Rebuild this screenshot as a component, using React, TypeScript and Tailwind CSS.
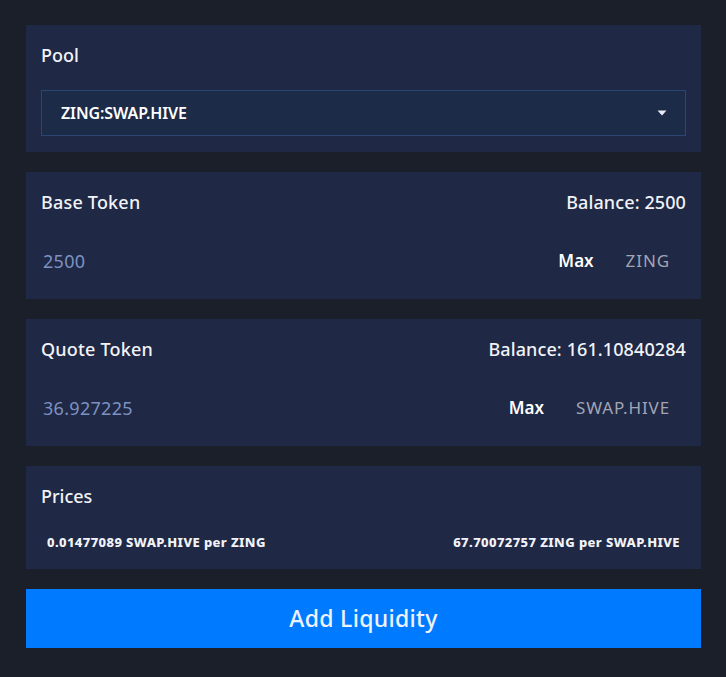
import React from "react";

const font = { fontFamily: '"Noto Sans", "Open Sans", sans-serif' };

function TokenCard({ label, balance, value, token }: { label: string; balance: string; value: string; token: string }) {
  return (
    <div className="bg-[#1f2844] px-[15px] pt-4 pb-[15px]">
      <div className="flex h-7 items-center justify-between text-[18px] font-medium text-[#f1f3f8]">
        <span className="tracking-[0.2px]">{label}</span>
        <span className="tracking-[0.1px]">Balance: {balance}</span>
      </div>
      <div className="mt-[22px] flex h-[46px] items-center">
        <span className="flex-1 pl-[2px] text-[18px] tracking-[0.3px] text-[#7d92c2]">{value}</span>
        <span className="text-[17px] font-semibold text-white">Max</span>
        <span className="ml-8 pr-4 text-[17px] tracking-[0.9px] text-[#a2a5b5]">{token}</span>
      </div>
    </div>
  );
}

export default function App() {
  return (
    <div className="min-h-[677px] w-full bg-[#1b1f2a] pl-[26px] pr-[25px] pt-[25px]" style={font}>
      <div className="flex flex-col gap-5">
        <div className="bg-[#1f2844] px-[15px] pt-4 pb-4">
          <div className="flex h-7 items-center text-[18px] font-medium text-[#f1f3f8]">Pool</div>
          <div className="mt-[21px] flex h-[46px] items-center justify-between border border-[#2b4670] bg-[#1c2b47] pl-[19px] pr-[18px]">
            <span className="text-[16px] font-semibold tracking-[-0.1px] text-white">ZING:SWAP.HIVE</span>
            <svg width="10" height="6" viewBox="0 0 10 6">
              <path d="M0.5 0.5 L9.5 0.5 L5 5.5 Z" fill="#e8ecf4" />
            </svg>
          </div>
        </div>
        <TokenCard label="Base Token" balance="2500" value="2500" token="ZING" />
        <TokenCard label="Quote Token" balance="161.10840284" value="36.927225" token="SWAP.HIVE" />
        <div className="bg-[#1f2844] px-[15px] pt-4 pb-4">
          <div className="flex h-7 items-center text-[18px] font-medium text-[#f1f3f8]">Prices</div>
          <div className="mt-[23px] flex h-5 items-center justify-between px-[6px] text-[13px] font-extrabold tracking-[0.4px] text-[#f1f3f8]">
            <span>0.01477089 SWAP.HIVE per ZING</span>
            <span>67.70072757 ZING per SWAP.HIVE</span>
          </div>
        </div>
        <button className="flex h-[59px] items-center justify-center bg-[#007bff] text-[23px] font-medium tracking-[0.3px] text-[#eef2fb]">
          Add Liquidity
        </button>
      </div>
    </div>
  );
}
